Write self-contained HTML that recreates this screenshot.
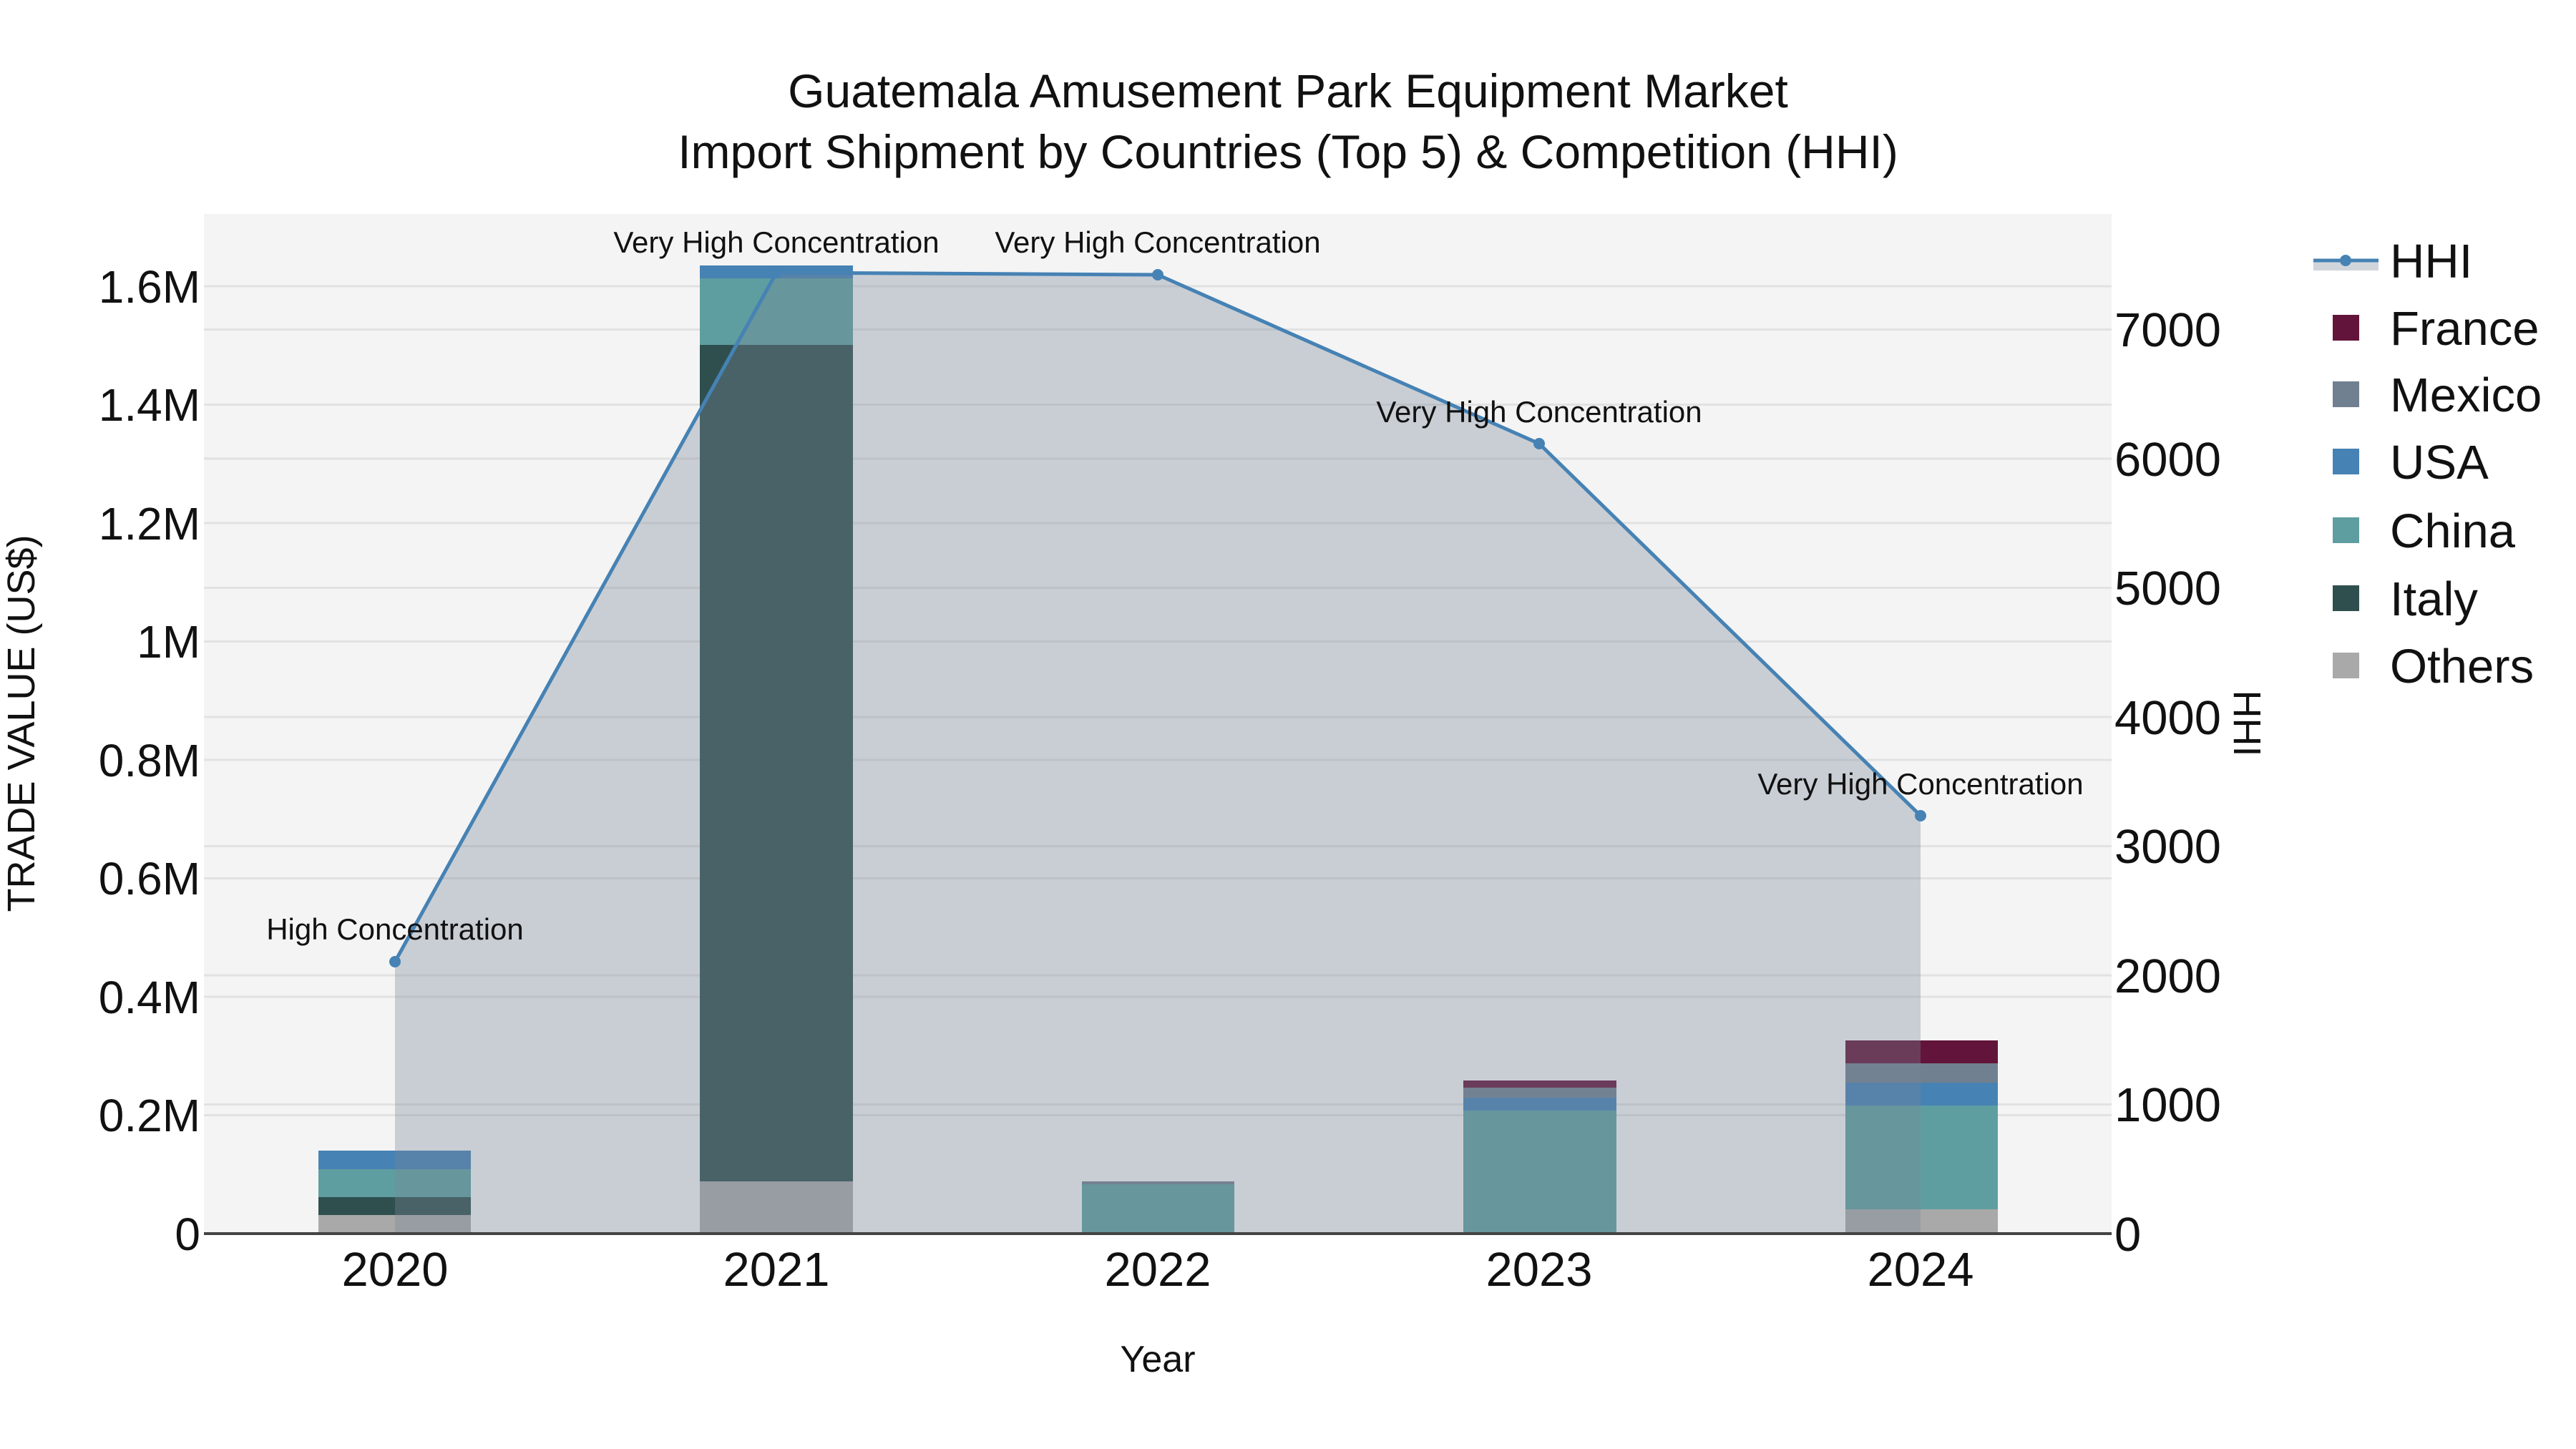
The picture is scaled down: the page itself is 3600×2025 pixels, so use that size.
<!DOCTYPE html>
<html><head><meta charset="utf-8"><style>
html,body{margin:0;padding:0;background:#fff;}
svg{display:block;font-family:"Liberation Sans",Arial,sans-serif;}
</style></head><body>
<svg width="3600" height="2025" viewBox="0 0 3600 2025" xmlns="http://www.w3.org/2000/svg">
<rect x="0" y="0" width="3600" height="2025" fill="#fff"/>
<rect x="285" y="299" width="2666" height="1425" fill="#f4f4f4"/>
<g stroke="#e2e2e2" stroke-width="3">
<line x1="285" x2="2951" y1="1558.5" y2="1558.5"/><line x1="285" x2="2951" y1="1393" y2="1393"/>
<line x1="285" x2="2951" y1="1227.5" y2="1227.5"/><line x1="285" x2="2951" y1="1062" y2="1062"/>
<line x1="285" x2="2951" y1="896.5" y2="896.5"/><line x1="285" x2="2951" y1="731" y2="731"/>
<line x1="285" x2="2951" y1="565.5" y2="565.5"/><line x1="285" x2="2951" y1="400" y2="400"/>
<line x1="285" x2="2951" y1="1543.5" y2="1543.5"/><line x1="285" x2="2951" y1="1363" y2="1363"/>
<line x1="285" x2="2951" y1="1182.5" y2="1182.5"/><line x1="285" x2="2951" y1="1002" y2="1002"/>
<line x1="285" x2="2951" y1="821.5" y2="821.5"/><line x1="285" x2="2951" y1="641" y2="641"/>
<line x1="285" x2="2951" y1="460.5" y2="460.5"/>
</g>
<g>
<rect x="445" y="1698" width="213" height="26" fill="#a9a9a9"/>
<rect x="445" y="1673" width="213" height="25" fill="#2f4f4f"/>
<rect x="445" y="1634" width="213" height="39" fill="#5f9ea0"/>
<rect x="445" y="1608" width="213" height="26" fill="#4682b4"/>

<rect x="978" y="1651" width="214" height="73" fill="#a9a9a9"/>
<rect x="978" y="482" width="214" height="1169" fill="#2f4f4f"/>
<rect x="978" y="389" width="214" height="93" fill="#5f9ea0"/>
<rect x="978" y="371" width="214" height="18" fill="#4682b4"/>

<rect x="1512" y="1655" width="213" height="69" fill="#5f9ea0"/>
<rect x="1512" y="1651" width="213" height="4" fill="#708090"/>

<rect x="2045" y="1552" width="214" height="172" fill="#5f9ea0"/>
<rect x="2045" y="1534" width="214" height="18" fill="#4682b4"/>
<rect x="2045" y="1520" width="214" height="14" fill="#708090"/>
<rect x="2045" y="1510" width="214" height="10" fill="#63143a"/>

<rect x="2579" y="1690" width="213" height="34" fill="#a9a9a9"/>
<rect x="2579" y="1545" width="213" height="145" fill="#5f9ea0"/>
<rect x="2579" y="1513" width="213" height="32" fill="#4682b4"/>
<rect x="2579" y="1486" width="213" height="27" fill="#708090"/>
<rect x="2579" y="1454" width="213" height="32" fill="#63143a"/>
</g>
<polygon points="552,1344 1085,381 1618,384 2151,620 2684,1140 2684,1724 552,1724" fill="rgba(119,136,153,0.35)"/>
<polyline points="552,1344 1085,381 1618,384 2151,620 2684,1140" fill="none" stroke="#4682b4" stroke-width="5"/>
<g fill="#4682b4">
<circle cx="552" cy="1344" r="8"/><circle cx="1085" cy="381" r="8"/><circle cx="1618" cy="384" r="8"/><circle cx="2151" cy="620" r="8"/><circle cx="2684" cy="1140" r="8"/>
</g>
<line x1="285" x2="2951" y1="1724" y2="1724" stroke="#444" stroke-width="4"/>
<g font-size="42" fill="#111" text-anchor="middle">
<text x="552" y="1313">High Concentration</text>
<text x="1085" y="353">Very High Concentration</text>
<text x="1618" y="353">Very High Concentration</text>
<text x="2151" y="590">Very High Concentration</text>
<text x="2684" y="1110">Very High Concentration</text>
</g>
<g font-size="66" fill="#111" text-anchor="middle">
<text x="1800" y="150">Guatemala Amusement Park Equipment Market</text>
<text x="1800" y="235">Import Shipment by Countries (Top 5) &amp; Competition (HHI)</text>
</g>
<g font-size="64" fill="#111" text-anchor="end">
<text x="280" y="1747">0</text>
<text x="280" y="1581">0.2M</text>
<text x="280" y="1416">0.4M</text>
<text x="280" y="1250">0.6M</text>
<text x="280" y="1085">0.8M</text>
<text x="280" y="919">1M</text>
<text x="280" y="754">1.2M</text>
<text x="280" y="588">1.4M</text>
<text x="280" y="423">1.6M</text>
</g>
<g font-size="67" fill="#111" text-anchor="start">
<text x="2955" y="1748">0</text>
<text x="2955" y="1567">1000</text>
<text x="2955" y="1387">2000</text>
<text x="2955" y="1206">3000</text>
<text x="2955" y="1026">4000</text>
<text x="2955" y="845">5000</text>
<text x="2955" y="665">6000</text>
<text x="2955" y="484">7000</text>
</g>
<g font-size="67" fill="#111" text-anchor="middle">
<text x="552" y="1797">2020</text>
<text x="1085" y="1797">2021</text>
<text x="1618" y="1797">2022</text>
<text x="2151" y="1797">2023</text>
<text x="2684" y="1797">2024</text>
</g>
<text x="1618" y="1917" font-size="52" fill="#111" text-anchor="middle">Year</text>
<text transform="translate(48,1011) rotate(-90)" font-size="54" fill="#111" text-anchor="middle">TRADE VALUE (US$)</text>
<text transform="translate(3122,1011) rotate(90)" font-size="54" fill="#111" text-anchor="middle">HHI</text>
<rect x="3233" y="366" width="91" height="12" fill="rgba(119,136,153,0.35)"/>
<line x1="3233" x2="3324" y1="364" y2="364" stroke="#4682b4" stroke-width="5"/>
<circle cx="3278" cy="364" r="8" fill="#4682b4"/>
<rect x="3260" y="440" width="37" height="36" fill="#63143a"/>
<rect x="3260" y="533" width="37" height="36" fill="#708090"/>
<rect x="3260" y="627" width="37" height="36" fill="#4682b4"/>
<rect x="3260" y="723" width="37" height="36" fill="#5f9ea0"/>
<rect x="3260" y="818" width="37" height="36" fill="#2f4f4f"/>
<rect x="3260" y="912" width="37" height="36" fill="#a9a9a9"/>
<g font-size="67" fill="#111">
<text x="3340" y="388">HHI</text>
<text x="3340" y="482">France</text>
<text x="3340" y="575">Mexico</text>
<text x="3340" y="669">USA</text>
<text x="3340" y="765">China</text>
<text x="3340" y="860">Italy</text>
<text x="3340" y="954">Others</text>
</g>
</svg>
</body></html>
